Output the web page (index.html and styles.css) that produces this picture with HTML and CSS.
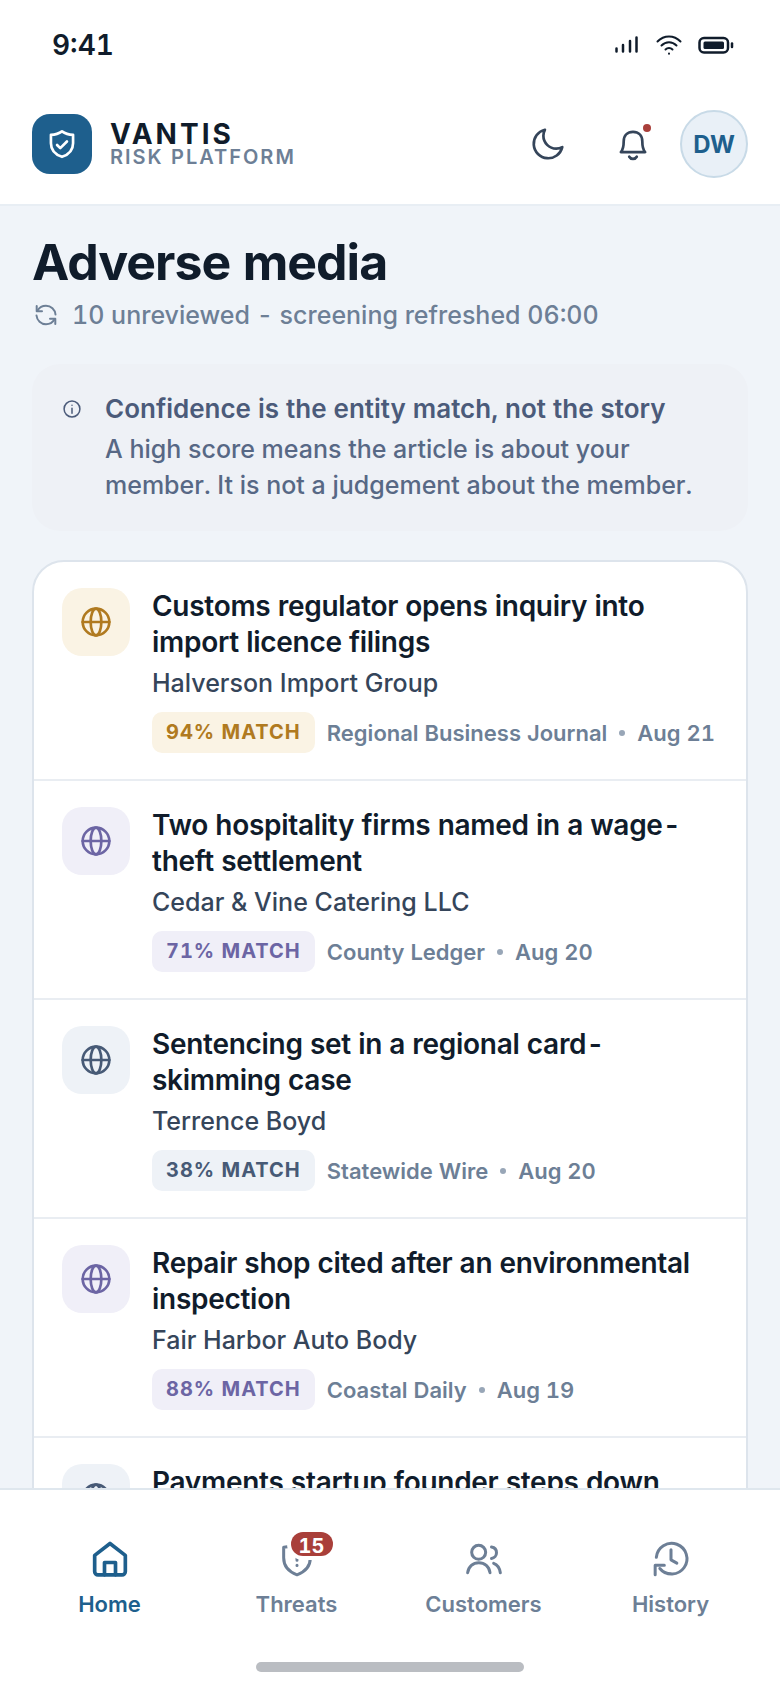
FILE: index.html
```
<!DOCTYPE html>
<html lang="en">
  <head>
    <meta charset="UTF-8" />
    <meta name="viewport" content="width=device-width, initial-scale=1.0" />
    <title>Adverse media - Vantis Risk Platform</title>
    <link rel="stylesheet" href="styles.css">
  </head>
  <body>
    <!-- Shared icon shapes -->
    <svg class="sprite" aria-hidden="true">
      <symbol id="icon-globe" viewBox="0 0 24 24">
        <circle cx="12" cy="12" r="10" />
        <ellipse cx="12" cy="12" rx="4" ry="10" />
        <path d="M2 12h20" />
      </symbol>
    </svg>

    <div class="app">
      <div class="status-bar">
        <span class="status-time">9:41</span>
        <div class="status-icons">
          <svg width="26" height="20" viewBox="0 0 26 20" class="icon status-signal">
            <path d="M2.5 13.5v3M9 10v6.5M16 6v10.5M22.5 2.500v14" />
          </svg>
          <svg width="28" height="22" viewBox="0 0 28 22" class="icon status-wifi">
            <path d="M2.500 7.500C9 .8 19 .8 25.500 7.500" />
            <path d="M6.500 11.500c4.300-4.300 10.700-4.300 15 0" />
            <path d="M10.500 15.500c2-2 5-2 7 0" />
            <path d="M14 19.600v.1" />
          </svg>
          <svg width="36" height="18" viewBox="0 0 36 18" class="icon status-battery">
            <rect x="1.500" y="2" width="28.500" height="14.500" rx="4.500" />
            <rect x="5.500" y="5.500" width="20.500" height="7.500" rx="1.500" class="battery-level" />
            <path d="M34 7.500v3.500" />
          </svg>
        </div>
      </div>

      <header class="header">
        <div class="logo">
          <svg width="32" height="32" viewBox="0 0 24 24" class="icon">
            <path d="M12 2.500c2.500 1.800 5.200 2.500 8.300 2.600v6.300c0 5.200-3.500 8.600-8.300 10.200-4.800-1.600-8.300-5-8.300-10.200V5.100c3.100-.1 5.800-.8 8.300-2.600z" />
            <path d="M8.300 12.700l2.400 2.400 5-5" />
          </svg>
        </div>
        <div class="brand">
          <span class="brand-name">VANTIS</span>
          <span class="brand-sub">RISK PLATFORM</span>
        </div>
        <div class="actions">
          <button type="button" class="icon-btn" aria-label="Dark mode">
            <svg width="36" height="36" viewBox="0 0 24 24" class="icon">
              <path d="M21.5 14.080c-1.200.64-2.570 1-4.020 1a8.560 8.560 0 0 1-8.560-8.560c0-1.450.36-2.820 1-4.020A9.630 9.630 0 1 0 21.500 14.080z" />
            </svg>
          </button>
          <button type="button" class="icon-btn" aria-label="Notifications">
            <svg width="36" height="36" viewBox="0 0 24 24" class="icon">
              <path d="M3.900 17.400c1.400-1.500 1.900-2.900 1.900-7.200C5.800 6.300 8.300 3.900 12 3.900s6.200 2.400 6.200 6.300c0 4.300.5 5.700 1.900 7.200z" />
              <path d="M9.500 20.500c.5.900 1.400 1.400 2.500 1.400s2-.5 2.500-1.400" />
            </svg>
            <span class="alert-dot"></span>
          </button>
          <button type="button" class="avatar">DW</button>
        </div>
      </header>

      <main class="content">
        <h1 class="page-title">Adverse media</h1>
        <p class="page-meta">
          <svg width="24" height="24" viewBox="0 0 24 24" class="icon">
            <path d="M21.500 11.500C21 6.500 17 2.800 12 2.800c-3.700 0-6.700 1.800-8.400 4.700" />
            <path d="M2.700 3v5.200H8" />
            <path d="M2.500 12.500c.5 5 4.500 8.700 9.500 8.700 3.700 0 6.700-1.800 8.400-4.700" />
            <path d="M21.300 21v-5.200H16" />
          </svg>
          <span>10 unreviewed - screening refreshed 06:00</span>
        </p>

        <section class="notice">
          <div class="notice-icon">
            <svg width="20" height="20" viewBox="0 0 24 24" class="icon">
              <circle cx="12" cy="12" r="9.500" />
              <path d="M12 11v6M12 7.500v.1" />
            </svg>
          </div>
          <div>
            <h2 class="notice-title">Confidence is the entity match, not the story</h2>
            <p class="notice-text">A high score means the article is about your member. It is not a judgement about the member.</p>
          </div>
        </section>

        <ul class="card">
          <li class="item amber">
            <div class="item-icon"><svg width="32" height="32" class="icon"><use href="#icon-globe" /></svg></div>
            <div class="item-body">
              <h3 class="item-title">Customs regulator opens inquiry into import licence filings</h3>
              <p class="item-name">Halverson Import Group</p>
              <div class="item-meta">
                <span class="match">94% MATCH</span>
                <span>Regional Business Journal</span>
                <span class="dot"></span>
                <span>Aug 21</span>
              </div>
            </div>
          </li>
          <li class="item purple">
            <div class="item-icon"><svg width="32" height="32" class="icon"><use href="#icon-globe" /></svg></div>
            <div class="item-body">
              <h3 class="item-title">Two hospitality firms named in a wage-theft settlement</h3>
              <p class="item-name">Cedar &amp; Vine Catering LLC</p>
              <div class="item-meta">
                <span class="match">71% MATCH</span>
                <span>County Ledger</span>
                <span class="dot"></span>
                <span>Aug 20</span>
              </div>
            </div>
          </li>
          <li class="item slate">
            <div class="item-icon"><svg width="32" height="32" class="icon"><use href="#icon-globe" /></svg></div>
            <div class="item-body">
              <h3 class="item-title">Sentencing set in a regional card-skimming case</h3>
              <p class="item-name">Terrence Boyd</p>
              <div class="item-meta">
                <span class="match">38% MATCH</span>
                <span>Statewide Wire</span>
                <span class="dot"></span>
                <span>Aug 20</span>
              </div>
            </div>
          </li>
          <li class="item purple">
            <div class="item-icon"><svg width="32" height="32" class="icon"><use href="#icon-globe" /></svg></div>
            <div class="item-body">
              <h3 class="item-title">Repair shop cited after an environmental inspection</h3>
              <p class="item-name">Fair Harbor Auto Body</p>
              <div class="item-meta">
                <span class="match">88% MATCH</span>
                <span>Coastal Daily</span>
                <span class="dot"></span>
                <span>Aug 19</span>
              </div>
            </div>
          </li>
          <li class="item slate">
            <div class="item-icon"><svg width="32" height="32" class="icon"><use href="#icon-globe" /></svg></div>
            <div class="item-body">
              <h3 class="item-title">Payments startup founder steps down</h3>
            </div>
          </li>
        </ul>
      </main>

      <footer class="tab-bar">
        <nav class="tabs">
          <a href="#home" class="tab active">
            <svg width="40" height="40" viewBox="0 0 24 24" class="icon">
              <path d="M2.800 9.800L12 2.700l9.200 7.100v9.700a2 2 0 0 1-2 2H4.800a2 2 0 0 1-2-2z" />
              <path d="M8.700 21.500v-7.400h6.600v7.400" />
            </svg>
            Home
          </a>
          <a href="#threats" class="tab">
            <span class="tab-icon">
              <svg width="40" height="40" viewBox="0 0 24 24" class="icon">
                <path d="M12 2.500c2.400 1.500 5 2.200 8 2.400v6.400c0 5-3.300 8.500-8 10.200-4.700-1.700-8-5.200-8-10.200V4.900c3-.2 5.600-.9 8-2.400z" />
                <path d="M12 7.500v5.300M12 15.800v.1" />
              </svg>
              <span class="badge">15</span>
            </span>
            Threats
          </a>
          <a href="#customers" class="tab">
            <svg width="40" height="40" viewBox="0 0 24 24" class="icon">
              <circle cx="8.800" cy="8" r="4.200" />
              <path d="M2.200 20.200c.5-3.600 3.200-6 6.700-6s6.200 2.400 6.700 6" />
              <path d="M16.500 4.800c1.700.3 3 1.600 3 3.400s-1.300 3.200-3 3.500" />
              <path d="M17.800 14.600c2.200.8 3.600 2.800 4 5.600" />
            </svg>
            Customers
          </a>
          <a href="#history" class="tab">
            <svg width="40" height="40" viewBox="0 0 24 24" class="icon">
              <path d="M3.200 11A9.200 9.200 0 1 1 5.300 17.700c1.600 2 4 3.200 6.800 3.200" />
              <path d="M2.500 21.500v-5.800H8" />
              <path d="M12 6.500v6l3.500 2" />
            </svg>
            History
          </a>
        </nav>
        <div class="home-indicator"></div>
      </footer>
    </div>
  </body>
</html>
```
FILE: styles.css
```
* {
  margin: 0;
  padding: 0;
  box-sizing: border-box;
}

body {
  background-color: #f0f4f9;
  color: #101c2b;
  font-family: Inter, "Liberation Sans", sans-serif;
  font-variant-numeric: tabular-nums;
}

button {
  border: none;
  background: none;
  font: inherit;
  color: inherit;
  cursor: pointer;
}

.sprite {
  position: absolute;
  width: 0;
  height: 0;
}

.icon {
  display: block;
  flex-shrink: 0;
  fill: none;
  stroke: currentColor;
  stroke-width: 1.8;
  stroke-linecap: round;
  stroke-linejoin: round;
}

.app {
  display: flex;
  flex-direction: column;
  height: 100vh;
}

/* Status bar */
.status-bar {
  display: flex;
  align-items: center;
  justify-content: space-between;
  height: 88px;
  padding: 2px 46px 0 52px;
  background: #ffffff;
}

.status-time {
  font-size: 28px;
  font-weight: 600;
}

.status-icons {
  display: flex;
  align-items: center;
  gap: 15px;
}

.status-signal,
.status-battery {
  stroke-width: 2.5;
}

.status-wifi {
  stroke-width: 2;
}

.battery-level {
  fill: currentColor;
  stroke: none;
}

/* Header */
.header {
  display: flex;
  align-items: center;
  gap: 18px;
  height: 118px;
  padding: 0 32px 4px;
  background: #ffffff;
  border-bottom: 2px solid #e8eef4;
}

.logo {
  display: grid;
  place-items: center;
  width: 60px;
  height: 60px;
  border-radius: 18px;
  background: #1e5f8d;
  color: #ffffff;
}

.logo .icon {
  stroke-width: 2;
}

.brand {
  display: flex;
  flex-direction: column;
}

.brand-name {
  font-size: 28px;
  font-weight: 700;
  line-height: 26px;
  letter-spacing: 3px;
}

.brand-sub {
  font-size: 20px;
  font-weight: 600;
  line-height: 20px;
  letter-spacing: 2px;
  color: #6d7f96;
}

.actions {
  display: flex;
  align-items: center;
  gap: 9px;
  margin-left: auto;
}

.icon-btn {
  position: relative;
  display: grid;
  place-items: center;
  width: 76px;
  height: 76px;
  color: #35455a;
}

.alert-dot {
  position: absolute;
  top: 18px;
  right: 20px;
  width: 8px;
  height: 8px;
  border-radius: 50%;
  background: #a93f3a;
}

.avatar {
  width: 68px;
  height: 68px;
  border: 2px solid #c8dae7;
  border-radius: 50%;
  background: #e9f0f7;
  color: #1e5f8d;
  font-size: 24px;
  font-weight: 700;
}

/* Content */
.content {
  flex: 1;
  min-height: 0;
  overflow-y: auto;
  scrollbar-width: none;
  padding: 26px 32px 0;
}

.page-title {
  font-size: 50px;
  font-weight: 700;
  line-height: 60px;
  letter-spacing: -1px;
}

.page-meta {
  display: flex;
  align-items: center;
  gap: 14px;
  margin: 6px 0 32px;
  padding-left: 2px;
  font-size: 25px;
  font-weight: 500;
  line-height: 34px;
  color: #6d7f96;
}

.page-meta .icon {
  stroke-width: 2;
}

.notice {
  display: flex;
  gap: 21px;
  margin-bottom: 29px;
  padding: 28px;
  border-radius: 28px;
  background: #eef1f6;
  color: #4b5b7a;
}

.notice-icon {
  display: grid;
  flex-shrink: 0;
  place-items: center;
  width: 24px;
  height: 34px;
}

.notice-title {
  margin-bottom: 5px;
  font-size: 26px;
  font-weight: 600;
  line-height: 34px;
}

.notice-text {
  font-size: 25px;
  font-weight: 500;
  line-height: 36px;
  color: #576885;
}

/* Article list */
.card {
  list-style: none;
  border: 2px solid #dde4ec;
  border-radius: 32px;
  background: #ffffff;
  overflow: hidden;
}

.item {
  display: flex;
  gap: 22px;
  padding: 26px 28px;
}

.item:not(:last-child) {
  border-bottom: 2px solid #e9edf2;
}

.item-icon {
  display: grid;
  flex-shrink: 0;
  place-items: center;
  width: 68px;
  height: 68px;
  border-radius: 20px;
}

.item-icon .icon {
  stroke-width: 2;
}

.item-body {
  flex: 1;
  min-width: 0;
}

.item-title {
  font-size: 28px;
  font-weight: 600;
  line-height: 36px;
  letter-spacing: -0.01em;
}

.item-name {
  margin: 6px 0 12px;
  font-size: 25px;
  font-weight: 500;
  line-height: 34px;
  color: #35455a;
}

.item-meta {
  display: flex;
  align-items: center;
  gap: 12px;
  font-size: 22px;
  font-weight: 600;
  color: #6d7f96;
  white-space: nowrap;
}

.match {
  padding: 0 14px;
  border-radius: 10px;
  font-size: 20px;
  font-weight: 700;
  line-height: 41px;
  letter-spacing: 1px;
}

.dot {
  width: 6px;
  height: 6px;
  border-radius: 50%;
  background: #98a6b7;
}

.amber .item-icon,
.amber .match {
  background: #faf3e4;
  color: #b07a20;
}

.purple .item-icon,
.purple .match {
  background: #f0eff8;
  color: #6c65a4;
}

.slate .item-icon,
.slate .match {
  background: #eef2f7;
  color: #475a76;
}

/* Tab bar */
.tab-bar {
  display: flex;
  flex-direction: column;
  align-items: center;
  justify-content: space-between;
  height: 200px;
  padding: 49px 16px 16px;
  background: #ffffff;
  border-top: 2px solid #dfe7ee;
}

.tabs {
  display: grid;
  grid-template-columns: repeat(4, 1fr);
  width: 100%;
}

.tab {
  display: flex;
  flex-direction: column;
  align-items: center;
  gap: 11px;
  color: #6d7f96;
  font-size: 22px;
  font-weight: 600;
  line-height: 28px;
  text-decoration: none;
}

.tab .icon {
  stroke-width: 1.8;
}

.tab.active {
  color: #1e5f8d;
}

.tab.active .icon {
  stroke-width: 2.2;
}

.tab-icon {
  position: relative;
}

.badge {
  position: absolute;
  top: -7px;
  left: 14px;
  width: 42px;
  height: 24px;
  border-radius: 12px;
  background: #a93f3a;
  box-shadow: 0 0 0 4px #ffffff;
  color: #ffffff;
  font-size: 20px;
  font-weight: 700;
  line-height: 28px;
  text-align: center;
}

.home-indicator {
  width: 268px;
  height: 10px;
  border-radius: 5px;
  background: #babdc2;
}
```
